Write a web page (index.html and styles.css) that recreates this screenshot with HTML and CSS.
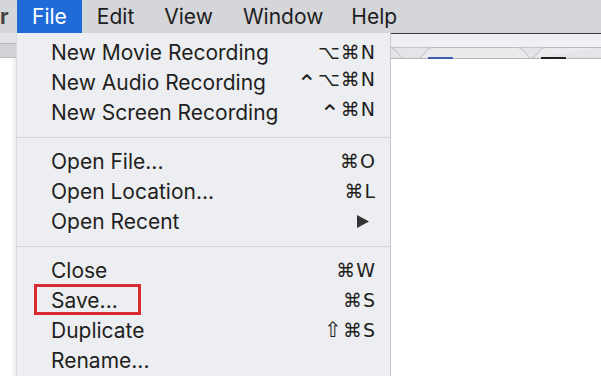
FILE: index.html
```html
<!DOCTYPE html>
<html lang="en">
<head>
  <meta charset="UTF-8">
  <title>QuickTime Player - File menu</title>
  <link rel="stylesheet" href="styles.css">
</head>
<body>
  <div class="menubar">
    <span class="app-name">r</span>
    <span class="menu-title active">File</span>
    <span class="menu-title">Edit</span>
    <span class="menu-title">View</span>
    <span class="menu-title">Window</span>
    <span class="menu-title">Help</span>
  </div>

  <div class="desktop">
    <div class="side-window">
      <div class="side-top"></div>
      <div class="side-bar"></div>
      <div class="side-body"></div>
    </div>

    <div class="file-menu">
      <div class="menu-item"><span>New Movie Recording</span><span class="keys">⌥⌘N</span></div>
      <div class="menu-item"><span>New Audio Recording</span><span class="keys"><span class="ctrl">⌃</span>⌥⌘N</span></div>
      <div class="menu-item"><span>New Screen Recording</span><span class="keys"><span class="ctrl">⌃</span>⌘N</span></div>
      <div class="separator"></div>
      <div class="menu-item"><span>Open File...</span><span class="keys">⌘O</span></div>
      <div class="menu-item"><span>Open Location...</span><span class="keys">⌘L</span></div>
      <div class="menu-item">
        <span>Open Recent</span>
        <svg class="submenu-arrow" width="12" height="13" viewBox="0 0 12 13"><path d="M0 0 L12 6.5 L0 13 Z" fill="#333"/></svg>
      </div>
      <div class="separator"></div>
      <div class="menu-item"><span>Close</span><span class="keys">⌘W</span></div>
      <div class="menu-item highlighted"><span>Save...</span><span class="keys">⌘S</span></div>
      <div class="menu-item"><span>Duplicate</span><span class="keys"><span class="shift">⇧</span>⌘S</span></div>
      <div class="menu-item"><span>Rename...</span><span class="keys"></span></div>
    </div>

    <div class="browser">
      <div class="browser-top"></div>
      <svg class="tab-strip" width="210" height="12" viewBox="0 0 210 12" preserveAspectRatio="none">
        <rect x="0" y="0" width="210" height="12" fill="#e4e5e8"/>
        <path d="M0 0.5 H210" stroke="#c4c6ca" stroke-width="1"/>
        <path d="M-2 0.5 C6 0.5 8 11 14 11.5" stroke="#b9bbbf" fill="none"/>
        <path d="M27 11.5 C33 11 34 0.5 42 0.5 H126 C134 0.5 135 11 141 11.5" stroke="#b9bbbf" fill="#ebebed"/>
        <path d="M140 11.5 C146 11 147 0.5 155 0.5 H210" stroke="#b9bbbf" fill="#ebebed"/>
        <path d="M0 11.5 H210" stroke="#b4b6ba" stroke-width="1"/>
        <rect x="37" y="10" width="25" height="2" fill="#3b5fae"/>
        <rect x="150" y="10" width="25" height="2" fill="#222"/>
      </svg>
      <div class="browser-page"></div>
    </div>
  </div>
</body>
</html>
```

FILE: styles.css
```css
html, body {
    height: 100%;
}

body {
    margin: 0;
    overflow: hidden;
    font-family: Inter, "Liberation Sans", Arial, sans-serif;
    color: #1f1f21;
    background: #fff;
}

.menubar {
    display: flex;
    height: 33px;
    background: #d5d6d9;
    font-size: 21px;
    line-height: 33px;
}

.app-name {
    width: 17px;
    font-weight: bold;
    color: #444;
}

.menu-title {
    padding: 0 15px;
    color: #1d1d1f;
}

.menu-title:last-child {
    margin-left: -2px;
}

.menu-title.active {
    background: #1f6bd8;
    color: white;
}

.desktop {
    display: flex;
    height: 343px;
}

/* window sitting behind the menu on the left */
.side-window {
    width: 17px;
    display: flex;
    flex-direction: column;
}

.side-top {
    height: 10px;
    background: #e2e3e5;
    border-bottom: 1px solid #b9babd;
}

.side-bar {
    height: 13px;
    background: #d2d3d6;
    border-bottom: 1px solid #b9babd;
}

.side-body {
    flex: 1;
    background: linear-gradient(90deg, #ffffff 60%, #e9e9ea 100%);
}

.file-menu {
    width: 373px;
    padding-top: 4px;
    background: #eceef1;
    border-right: 1px solid #c7c8cb;
    box-shadow: -1px 0 0 #d8d9dc;
    font-size: 21px;
}

.menu-item {
    position: relative;
    display: flex;
    justify-content: space-between;
    align-items: center;
    height: 30px;
    padding: 0 14px 0 34px;
}

.keys {
    font-family: "DejaVu Sans", sans-serif;
    font-size: 19px;
    letter-spacing: 1px;
}

.keys .ctrl {
    font-size: 24px;
    line-height: 1;
    vertical-align: -6px;
}

.keys .shift {
    font-size: 21px;
    line-height: 1;
}

.submenu-arrow {
    margin-right: 7px;
}

/* red annotation box drawn over the Save item */
.menu-item.highlighted::before {
    content: "";
    position: absolute;
    left: 17px;
    top: -1px;
    width: 101px;
    height: 25px;
    border: 3px solid #d92a2f;
}

.separator {
    height: 1px;
    margin: 10px 0 8px;
    background: #d4d6d9;
}

.browser {
    flex: 1;
    display: flex;
    flex-direction: column;
}

.browser-top {
    height: 13px;
    background: #eef0f3;
    border-top: 1px solid #3a3a3c;
}

.tab-strip {
    display: block;
    width: 100%;
}

.browser-page {
    flex: 1;
    background: #fff;
}
```
